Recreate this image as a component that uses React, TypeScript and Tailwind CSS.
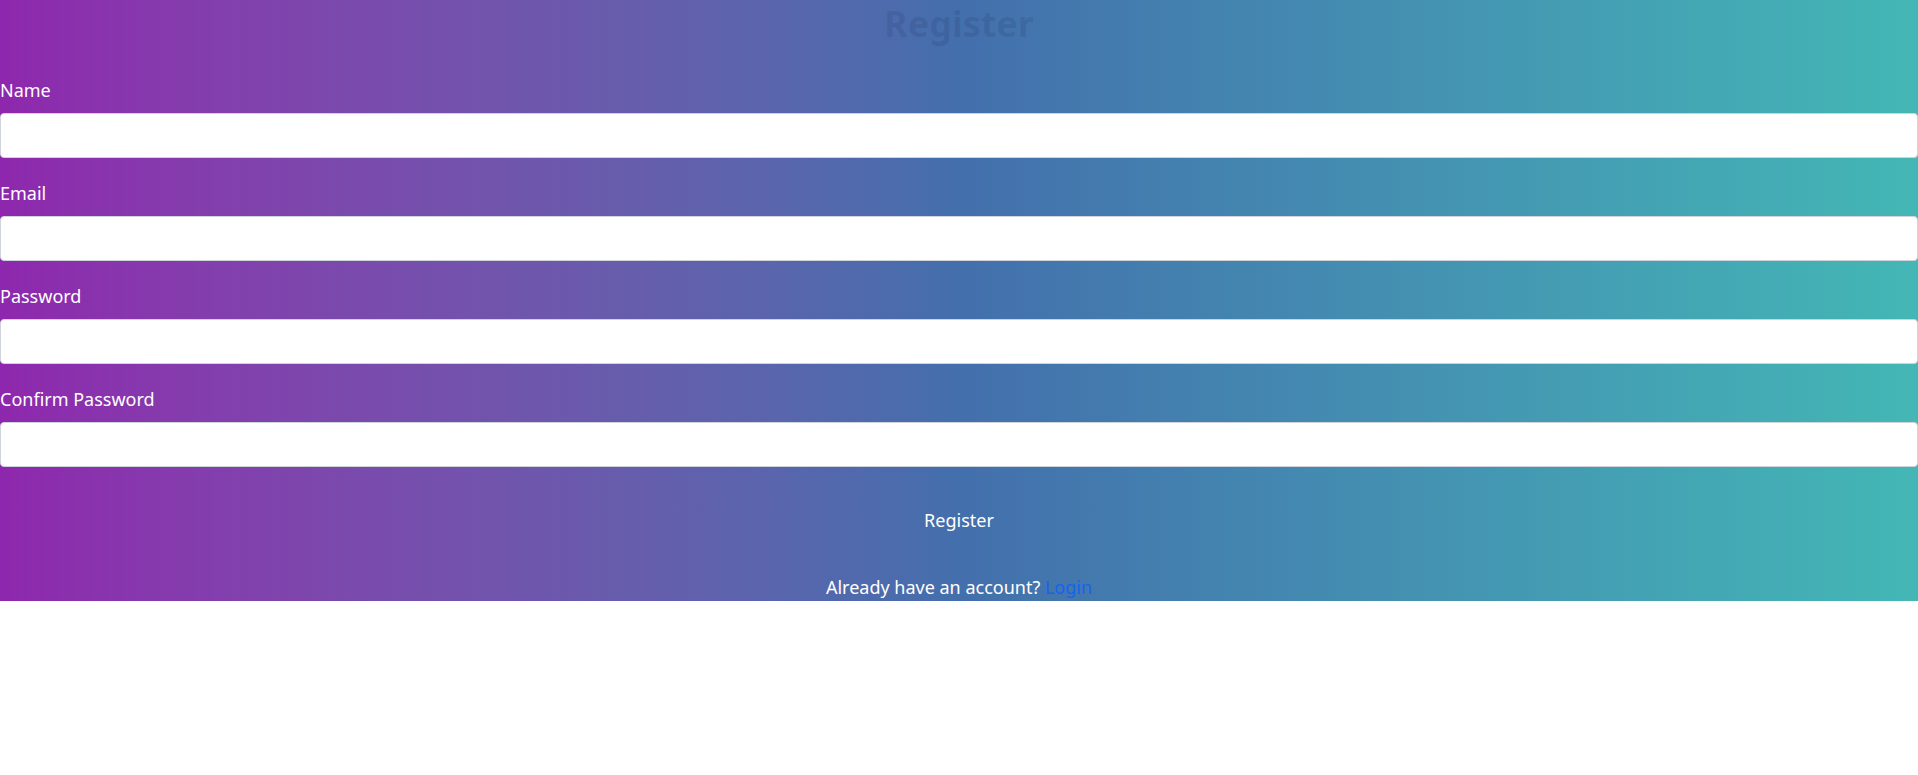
const fields = [
  { label: "Name", type: "text" },
  { label: "Email", type: "email" },
  { label: "Password", type: "password" },
  { label: "Confirm Password", type: "password" },
];

const App = () => {
  return (
    <div className="min-h-screen bg-white" style={{ fontFamily: '"Noto Sans", "Open Sans", sans-serif' }}>
      <div className="bg-gradient-to-r from-[#8e27ad] via-[#436fac] to-[#43b7b5] text-white text-[18px] leading-[27px]">
        <h1 className="text-center text-[36px] leading-[48px] font-bold text-[rgba(20,30,70,0.12)]">Register</h1>

        <form className="mt-[29px]" onSubmit={(e) => e.preventDefault()}>
          {fields.map((field) => (
            <div key={field.label} className="mb-[22px]">
              <label className="block mb-[9px]">{field.label}</label>
              <input
                type={field.type}
                className="block w-full h-[45px] bg-white border border-[#cfd4da] rounded-[4px] px-3 text-black"
              />
            </div>
          ))}

          <div className="flex justify-center">
            <button type="submit" className="px-4 py-[9px] mt-[9px] text-white">
              Register
            </button>
          </div>
        </form>

        <p className="text-center mt-[31px]">
          Already have an account? <a href="#" className="text-[#1464f0]">Login</a>
        </p>
      </div>
    </div>
  );
};

export default App;
